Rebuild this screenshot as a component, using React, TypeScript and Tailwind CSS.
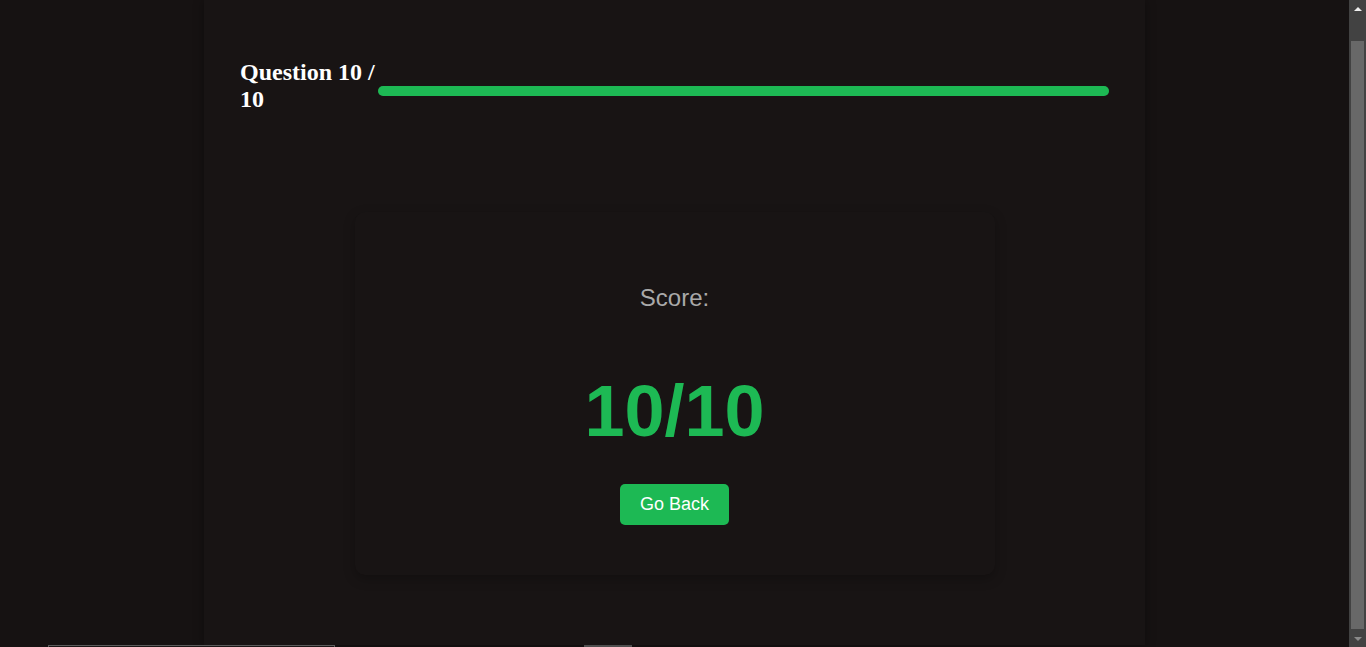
import React from 'react';

const GREEN = 'bg-[#1db954]';

function FakeScrollbar() {
  // browser chrome in the reference: page is scrolled to its bottom
  return (
    <div className="fixed right-0 top-0 flex h-screen w-[17px] flex-col bg-[#424242]">
      <div className="flex h-[17px] items-center justify-center">
        <div className="h-0 w-0 border-x-[4px] border-b-[4px] border-x-transparent border-b-[#f0f0f0]" />
      </div>
      <div className="flex-1 px-[2px] pt-[24px] pb-[1px]">
        <div className="h-full w-full bg-[#686868]" />
      </div>
      <div className="flex h-[17px] items-center justify-center">
        <div className="h-0 w-0 border-x-[4px] border-t-[4px] border-x-transparent border-t-[#8a8a8a]" />
      </div>
    </div>
  );
}

export default function App() {
  const current = 10;
  const total = 10;
  const score = 10;
  const pct = Math.round((current / total) * 100);

  return (
    <div className="min-h-screen bg-[#161212] pr-[17px] font-['Liberation_Sans',Arial,sans-serif]">
      {/* Quiz column */}
      <div className="mx-auto h-[645px] w-[941px] bg-[#181414] px-9 pt-[59px] shadow-[0_0_10px_rgba(0,0,0,0.35)]">
        {/* Header */}
        <div className="flex items-start">
          <h2 className="w-[138px] shrink-0 font-['Liberation_Serif','Times_New_Roman',serif] text-[24px] font-bold leading-[27px] text-white">
            Question {current} / {total}
          </h2>
          <div className="mt-[27px] h-[10px] flex-1 rounded-full bg-[#2a2626]">
            <div className={`h-full rounded-full ${GREEN}`} style={{ width: `${pct}%` }} />
          </div>
        </div>

        {/* Result card */}
        <div className="mx-auto mt-[99px] flex w-[640px] flex-col items-center rounded-[10px] bg-[#181414] pt-[72px] pb-[50px] shadow-[0_4px_12px_rgba(0,0,0,0.25)]">
          <p className="text-[24px] leading-[27.5px] text-[#a9a9a9]">Score:</p>
          <p className="mt-[58px] text-[72px] font-bold leading-[83px] text-[#1db954]">
            {score}/{total}
          </p>
          <button className={`mt-[31px] rounded-[5px] ${GREEN} px-5 py-[10px] text-[18px] leading-[21px] text-white`}>
            Go Back
          </button>
        </div>
      </div>

      {/* Below the fold */}
      <div className="flex h-[28px]">
        <div className="ml-[48px] h-full w-[287px] border border-[#5c5c5c] bg-[#1c1818]" />
        <div className="ml-[249px] h-full w-[48px] bg-[#4f4f4f]" />
      </div>

      <FakeScrollbar />
    </div>
  );
}
